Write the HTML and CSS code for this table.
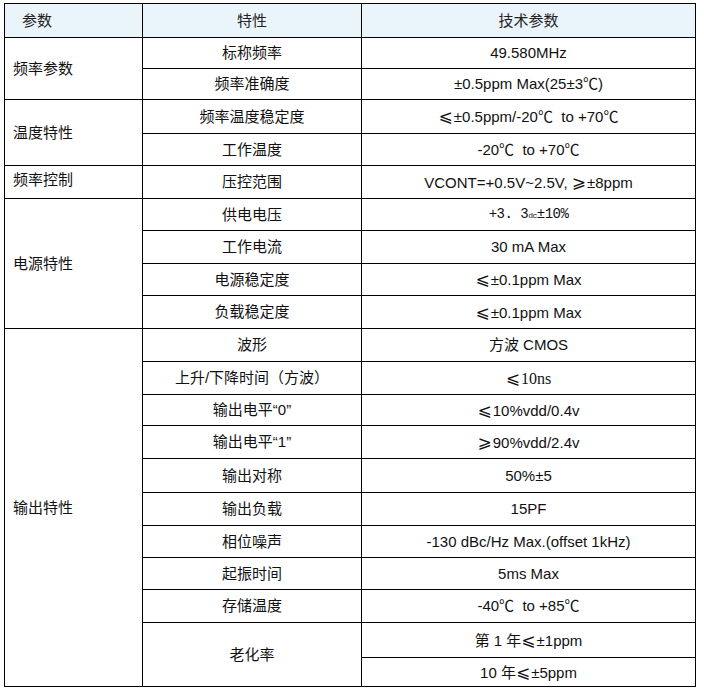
FILE: index.html
```html
<!DOCTYPE html>
<html lang="zh-CN">
<head>
<meta charset="utf-8">
<title>技术参数</title>
<link rel="stylesheet" href="styles.css">
</head>
<body>
<table class="spec">
  <colgroup>
    <col class="c1"><col class="c2"><col class="c3">
  </colgroup>
  <thead>
    <tr class="h34">
      <th class="first">参数</th>
      <th>特性</th>
      <th>技术参数</th>
    </tr>
  </thead>
  <tbody>
    <tr class="h31"><td class="group" rowspan="2">频率参数</td><td>标称频率</td><td>49.580MHz</td></tr>
    <tr class="h31"><td>频率准确度</td><td>±0.5ppm Max(25±3℃)</td></tr>
    <tr class="h34"><td class="group" rowspan="2">温度特性</td><td>频率温度稳定度</td><td><span class="le">⩽</span>±0.5ppm/-20℃&nbsp; to +70℃</td></tr>
    <tr class="h32"><td>工作温度</td><td>-20℃&nbsp; to +70℃</td></tr>
    <tr class="h33"><td class="group top">频率控制</td><td>压控范围</td><td>VCONT=+0.5V~2.5V, <span class="le">⩾</span>±8ppm</td></tr>
    <tr class="h32"><td class="group" rowspan="4">电源特性</td><td>供电电压</td><td class="song">+3.&nbsp;3<span class="dc">dc</span>±10%</td></tr>
    <tr class="h33"><td>工作电流</td><td>30 mA Max</td></tr>
    <tr class="h32"><td>电源稳定度</td><td><span class="le">⩽</span>±0.1ppm Max</td></tr>
    <tr class="h33"><td>负载稳定度</td><td><span class="le">⩽</span>±0.1ppm Max</td></tr>
    <tr class="h33"><td class="group" rowspan="11">输出特性</td><td>波形</td><td>方波 CMOS</td></tr>
    <tr class="h33"><td>上升/下降时间（方波）</td><td class="serif"><span class="le">⩽</span>10ns</td></tr>
    <tr class="h31"><td>输出电平“0”</td><td><span class="le">⩽</span>10%vdd/0.4v</td></tr>
    <tr class="h33"><td>输出电平“1”</td><td><span class="le">⩾</span>90%vdd/2.4v</td></tr>
    <tr class="h34"><td>输出对称</td><td>50%±5</td></tr>
    <tr class="h33"><td>输出负载</td><td>15PF</td></tr>
    <tr class="h32"><td>相位噪声</td><td>-130 dBc/Hz Max.(offset 1kHz)</td></tr>
    <tr class="h32"><td>起振时间</td><td>5ms Max</td></tr>
    <tr class="h33"><td>存储温度</td><td>-40℃&nbsp; to +85℃</td></tr>
    <tr class="h35"><td rowspan="2">老化率</td><td>第 1 年<span class="le">⩽</span>±1ppm</td></tr>
    <tr class="h29"><td>10 年<span class="le">⩽</span>±5ppm</td></tr>
  </tbody>
</table>
</body>
</html>
```

FILE: styles.css
```css
html, body {
  background: #ffffff;
}
body {
  margin: 0;
  padding: 3px 0 0 4px;
  font-family: "Liberation Sans", "Noto Sans CJK SC", sans-serif;
  font-size: 15px;
  color: #111111;
}
.spec {
  border-collapse: collapse;
  table-layout: fixed;
  width: 691px;
}
.c1 { width: 138px; }
.c2 { width: 219px; }
.c3 { width: 334px; }

.spec th,
.spec td {
  border: 1px solid #000000;
  padding: 0 6px;
  text-align: center;
  vertical-align: middle;
  white-space: nowrap;
  line-height: 18px;
}
.spec th {
  background: #eaf4fb;
  font-weight: normal;
  color: #222222;
}
.spec th.first {
  text-align: left;
  padding-left: 17px;
}
.spec td.group {
  text-align: left;
  padding-left: 8px;
}
.spec td.top {
  padding-bottom: 4px;
}
.h29 { height: 29px; }
.h31 { height: 31px; }
.h32 { height: 32px; }
.h33 { height: 33px; }
.h34 { height: 34px; }
.h35 { height: 35px; }

.le {
  font-family: "DejaVu Sans", "Noto Sans CJK SC", sans-serif;
  font-size: 17px;
  line-height: 18px;
  margin-right: 1px;
}
.serif {
  font-family: "Liberation Serif", "Noto Sans CJK SC", serif;
  font-size: 16px;
}
.song {
  font-family: "Liberation Mono", "Noto Sans CJK SC", monospace;
  font-size: 14px;
  letter-spacing: -0.5px;
}
.dc {
  font-size: 8px;
}
```
